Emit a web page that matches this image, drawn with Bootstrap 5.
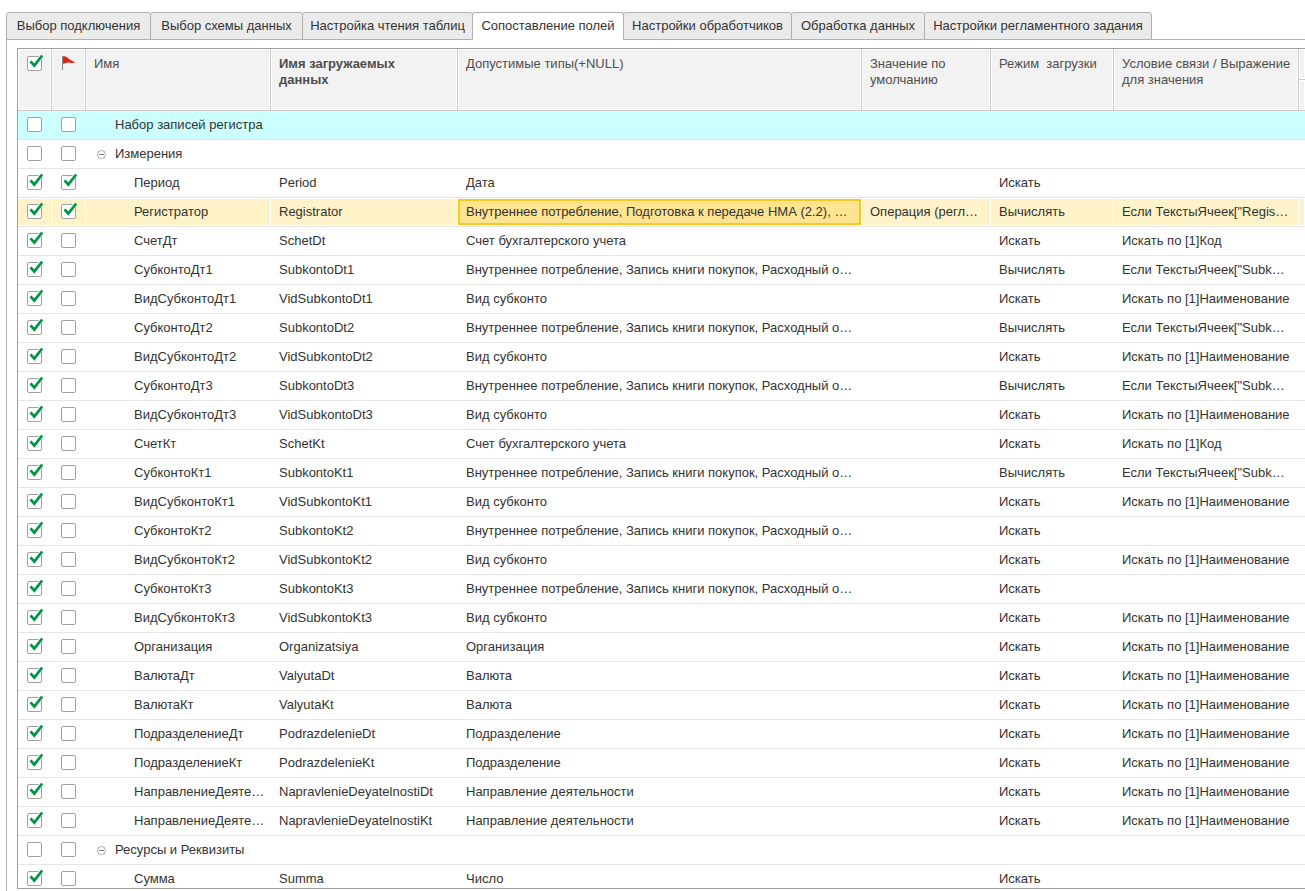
<!DOCTYPE html>
<html lang="ru">
<head>
<meta charset="utf-8">
<meta name="viewport" content="width=device-width, initial-scale=1">
<title>Сопоставление полей</title>
<link href="https://cdn.jsdelivr.net/npm/bootstrap@5.3.0/dist/css/bootstrap.min.css" rel="stylesheet">
<style>
  body { font-family: "Liberation Sans", Arial, sans-serif; font-size: 13px; line-height: 16px; color: #333; background: #fff; }

  .page { padding: 12px 0 0 6px; }
  .page-tabs { display: grid; grid-template-columns: 144px 152px 170px 151px 168px 133px 227px; border-bottom: 1px solid #b0b0b0; }
  .page-tabs .nav-link { width: calc(100% + 1px); padding: 5px 0; height: 28px; margin-bottom: -1px; border: 1px solid #b0b0b0; border-radius: 3px 3px 0 0; background: #ebebeb; color: #333; line-height: 16px; white-space: nowrap; }
  .page-tabs .nav-link.active { background: #fff; border-color: #b0b0b0 #b0b0b0 #fff; color: #333; }

  .tab-panel { border-left: 1px solid #b0b0b0; padding: 8px 0 2px 10px; min-height: 0; }
  .grid-frame { border: 1px solid #a0a0a0; border-right: 0; min-height: 0; }

  .field-grid { table-layout: fixed; width: 100%; border-collapse: separate; border-spacing: 0; }
  .field-grid th { height: 31px; padding: 7px 7px 0 8px; vertical-align: top; font-weight: 400; color: #4d4d4d; background: #f2f2f2; border-right: 1px solid #c8c8c8; border-bottom: 1px solid #c8c8c8; box-shadow: inset 0 0 0 1px #fff; }
  .field-grid th.edge { padding: 0; border-right: 0; }
  .field-grid td { height: 29px; padding: 0 0 0 8px; vertical-align: middle; white-space: nowrap; overflow: hidden; border-bottom: 1px solid #e5e5e5; }
  .field-grid .pick { padding: 4px 0 0 9px; vertical-align: top; }
  .field-grid th.pick { padding-top: 5px; }
  .col-pick { width: 34px; } .col-name { width: 185px; } .col-source { width: 187px; }
  .col-default { width: 129px; } .col-mode { width: 123px; } .col-link { width: 185px; } .col-edge { width: 6px; }

  .field-grid .root-row td { background: #ccffff; }
  .field-grid .current-row td { background: #fef2c8; border-right: 1px solid #fff; box-shadow: inset 0 1px #fff, inset 0 -1px #fff; }
  .field-grid .current-row td.current-cell { background: #fee391; background-clip: padding-box; box-shadow: inset 0 1px #fff, inset 0 -1px #fff, inset 0 3px #f8c822, inset 0 -3px #f8c822, inset 2px 0 #f8c822, inset -2px 0 #f8c822; }

  .box { appearance: none; display: block; width: 17px; height: 17px; margin: 0; background: no-repeat url("data:image/svg+xml,%3Csvg xmlns='http://www.w3.org/2000/svg' width='17' height='17'%3E%3Crect x='.5' y='2.5' width='14' height='14' rx='1.5' fill='%23fff' stroke='%23a0a0a0'/%3E%3C/svg%3E"); }
  .box:checked { background-image: url("data:image/svg+xml,%3Csvg xmlns='http://www.w3.org/2000/svg' width='17' height='17'%3E%3Crect x='.5' y='2.5' width='14' height='14' rx='1.5' fill='%23fff' stroke='%23a0a0a0'/%3E%3Cpath d='M3.6 7.6L7.3 11.4L14.6 1.8' fill='none' stroke='%23fff' stroke-width='4'/%3E%3Cpath d='M3.5 7.4L7.3 11.5L15.2 1.5' fill='none' stroke='%23009646' stroke-width='2.8'/%3E%3C/svg%3E"); }
  .branch { padding-left: 3px; }
  .fold { width: 9px; height: 17px; margin-right: 9px; padding: 0; border: 0; background: none; line-height: 0; }
  .field-grid td.indent { padding-left: 48px; }
</style>
</head>
<body>
<div class="page d-flex flex-column vh-100 overflow-hidden">
  <ul class="nav page-tabs" role="tablist">
    <li class="nav-item"><button class="nav-link" type="button" role="tab">Выбор подключения</button></li>
    <li class="nav-item"><button class="nav-link" type="button" role="tab">Выбор схемы данных</button></li>
    <li class="nav-item"><button class="nav-link" type="button" role="tab">Настройка чтения таблиц</button></li>
    <li class="nav-item"><button class="nav-link active" type="button" role="tab" aria-selected="true">Сопоставление полей</button></li>
    <li class="nav-item"><button class="nav-link" type="button" role="tab">Настройки обработчиков</button></li>
    <li class="nav-item"><button class="nav-link" type="button" role="tab">Обработка данных</button></li>
    <li class="nav-item"><button class="nav-link" type="button" role="tab">Настройки регламентного задания</button></li>
  </ul>
  <div class="tab-panel d-flex flex-column flex-grow-1">
    <div class="grid-frame flex-grow-1 overflow-hidden">
      <table class="field-grid">
        <colgroup><col class="col-pick"><col class="col-pick"><col class="col-name"><col class="col-source"><col><col class="col-default"><col class="col-mode"><col class="col-link"><col class="col-edge"></colgroup>
        <thead>
          <tr>
            <th rowspan="2" class="pick"><input class="box" type="checkbox" checked aria-label="Выбрать все"></th>
            <th rowspan="2" class="pick"><svg class="d-block" width="17" height="18" aria-hidden="true"><path d="M1.5 2v14" stroke="#8c8c8c"/><path d="M2 2.5C4 2 6 3 8 5L14 8.500C11 10 9 8 6.500 8.500L2 10Z" fill="#e62117"/></svg></th>
            <th rowspan="2">Имя</th>
            <th rowspan="2" class="fw-bold">Имя загружаемых<br>данных</th>
            <th rowspan="2">Допустимые типы(+NULL)</th>
            <th rowspan="2">Значение по умолчанию</th>
            <th rowspan="2">Режим&nbsp; загрузки</th>
            <th rowspan="2">Условие связи / Выражение для значения</th>
            <th class="edge"></th>
          </tr>
          <tr><th class="edge"></th></tr>
        </thead>
        <tbody id="fields"></tbody>
      </table>
    </div>
  </div>
</div>
<script src="https://cdn.jsdelivr.net/npm/bootstrap@5.3.0/dist/js/bootstrap.bundle.min.js"></script>
<script>
  const DOCS = 'Внутреннее потребление, Запись книги покупок, Расходный о…';
  const KIND = 'Вид субконто', ACC = 'Счет бухгалтерского учета';
  const FIND = 'Искать', CALC = 'Вычислять';
  const BY_NAME = 'Искать по [1]Наименование', BY_CODE = 'Искать по [1]Код', EXPR = 'Если ТекстыЯчеек["Subk…';

  // Group rows hold only a title; field rows: name, source, types, default, mode, link
  const rows = [
    { group: 'Набор записей регистра', root: true },
    { group: 'Измерения' },
    ['Период', 'Period', 'Дата', '', FIND, ''],
    ['Регистратор', 'Registrator', 'Внутреннее потребление, Подготовка к передаче НМА (2.2), …', 'Операция (регл…', CALC, 'Если ТекстыЯчеек["Regis…'],
    ['СчетДт', 'SchetDt', ACC, '', FIND, BY_CODE],
    ['СубконтоДт1', 'SubkontoDt1', DOCS, '', CALC, EXPR],
    ['ВидСубконтоДт1', 'VidSubkontoDt1', KIND, '', FIND, BY_NAME],
    ['СубконтоДт2', 'SubkontoDt2', DOCS, '', CALC, EXPR],
    ['ВидСубконтоДт2', 'VidSubkontoDt2', KIND, '', FIND, BY_NAME],
    ['СубконтоДт3', 'SubkontoDt3', DOCS, '', CALC, EXPR],
    ['ВидСубконтоДт3', 'VidSubkontoDt3', KIND, '', FIND, BY_NAME],
    ['СчетКт', 'SchetKt', ACC, '', FIND, BY_CODE],
    ['СубконтоКт1', 'SubkontoKt1', DOCS, '', CALC, EXPR],
    ['ВидСубконтоКт1', 'VidSubkontoKt1', KIND, '', FIND, BY_NAME],
    ['СубконтоКт2', 'SubkontoKt2', DOCS, '', FIND, ''],
    ['ВидСубконтоКт2', 'VidSubkontoKt2', KIND, '', FIND, BY_NAME],
    ['СубконтоКт3', 'SubkontoKt3', DOCS, '', FIND, ''],
    ['ВидСубконтоКт3', 'VidSubkontoKt3', KIND, '', FIND, BY_NAME],
    ['Организация', 'Organizatsiya', 'Организация', '', FIND, BY_NAME],
    ['ВалютаДт', 'ValyutaDt', 'Валюта', '', FIND, BY_NAME],
    ['ВалютаКт', 'ValyutaKt', 'Валюта', '', FIND, BY_NAME],
    ['ПодразделениеДт', 'PodrazdelenieDt', 'Подразделение', '', FIND, BY_NAME],
    ['ПодразделениеКт', 'PodrazdelenieKt', 'Подразделение', '', FIND, BY_NAME],
    ['НаправлениеДеяте…', 'NapravlenieDeyatelnostiDt', 'Направление деятельности', '', FIND, BY_NAME],
    ['НаправлениеДеяте…', 'NapravlenieDeyatelnostiKt', 'Направление деятельности', '', FIND, BY_NAME],
    { group: 'Ресурсы и Реквизиты' },
    ['Сумма', 'Summa', 'Число', '', FIND, '']
  ];
  const keys = ['Период', 'Регистратор'];
  const box = (on, label) => `<td class="pick"><input class="box" type="checkbox"${on ? ' checked' : ''} aria-label="${label}"></td>`;
  const minus = '<svg width="9" height="9" aria-hidden="true"><circle cx="4.500" cy="4.500" r="4" fill="none" stroke="#a6a6a6"/><path d="M2 4.500h5" stroke="#808080"/></svg>';

  document.getElementById('fields').innerHTML = rows.map(r => {
    if (r.group) {
      const fold = r.root ? '<span class="fold"></span>' : `<button class="fold" type="button" aria-label="Свернуть">${minus}</button>`;
      return `<tr class="${r.root ? 'root-row' : ''}">${box(false, 'Загружать: ' + r.group)}${box(false, 'Ключ: ' + r.group)}
        <td><div class="branch d-flex align-items-center">${fold}<span>${r.group}</span></div></td>${'<td></td>'.repeat(6)}</tr>`;
    }
    const current = r[0] === 'Регистратор';
    return `<tr class="${current ? 'current-row' : ''}">${box(true, 'Загружать: ' + r[0])}${box(keys.includes(r[0]), 'Ключ: ' + r[0])}` +
      r.map((t, i) => `<td class="${i === 0 ? 'indent' : current && i === 2 ? 'current-cell' : ''}">${t}</td>`).join('') + '<td></td></tr>';
  }).join('');
</script>
</body>
</html>
